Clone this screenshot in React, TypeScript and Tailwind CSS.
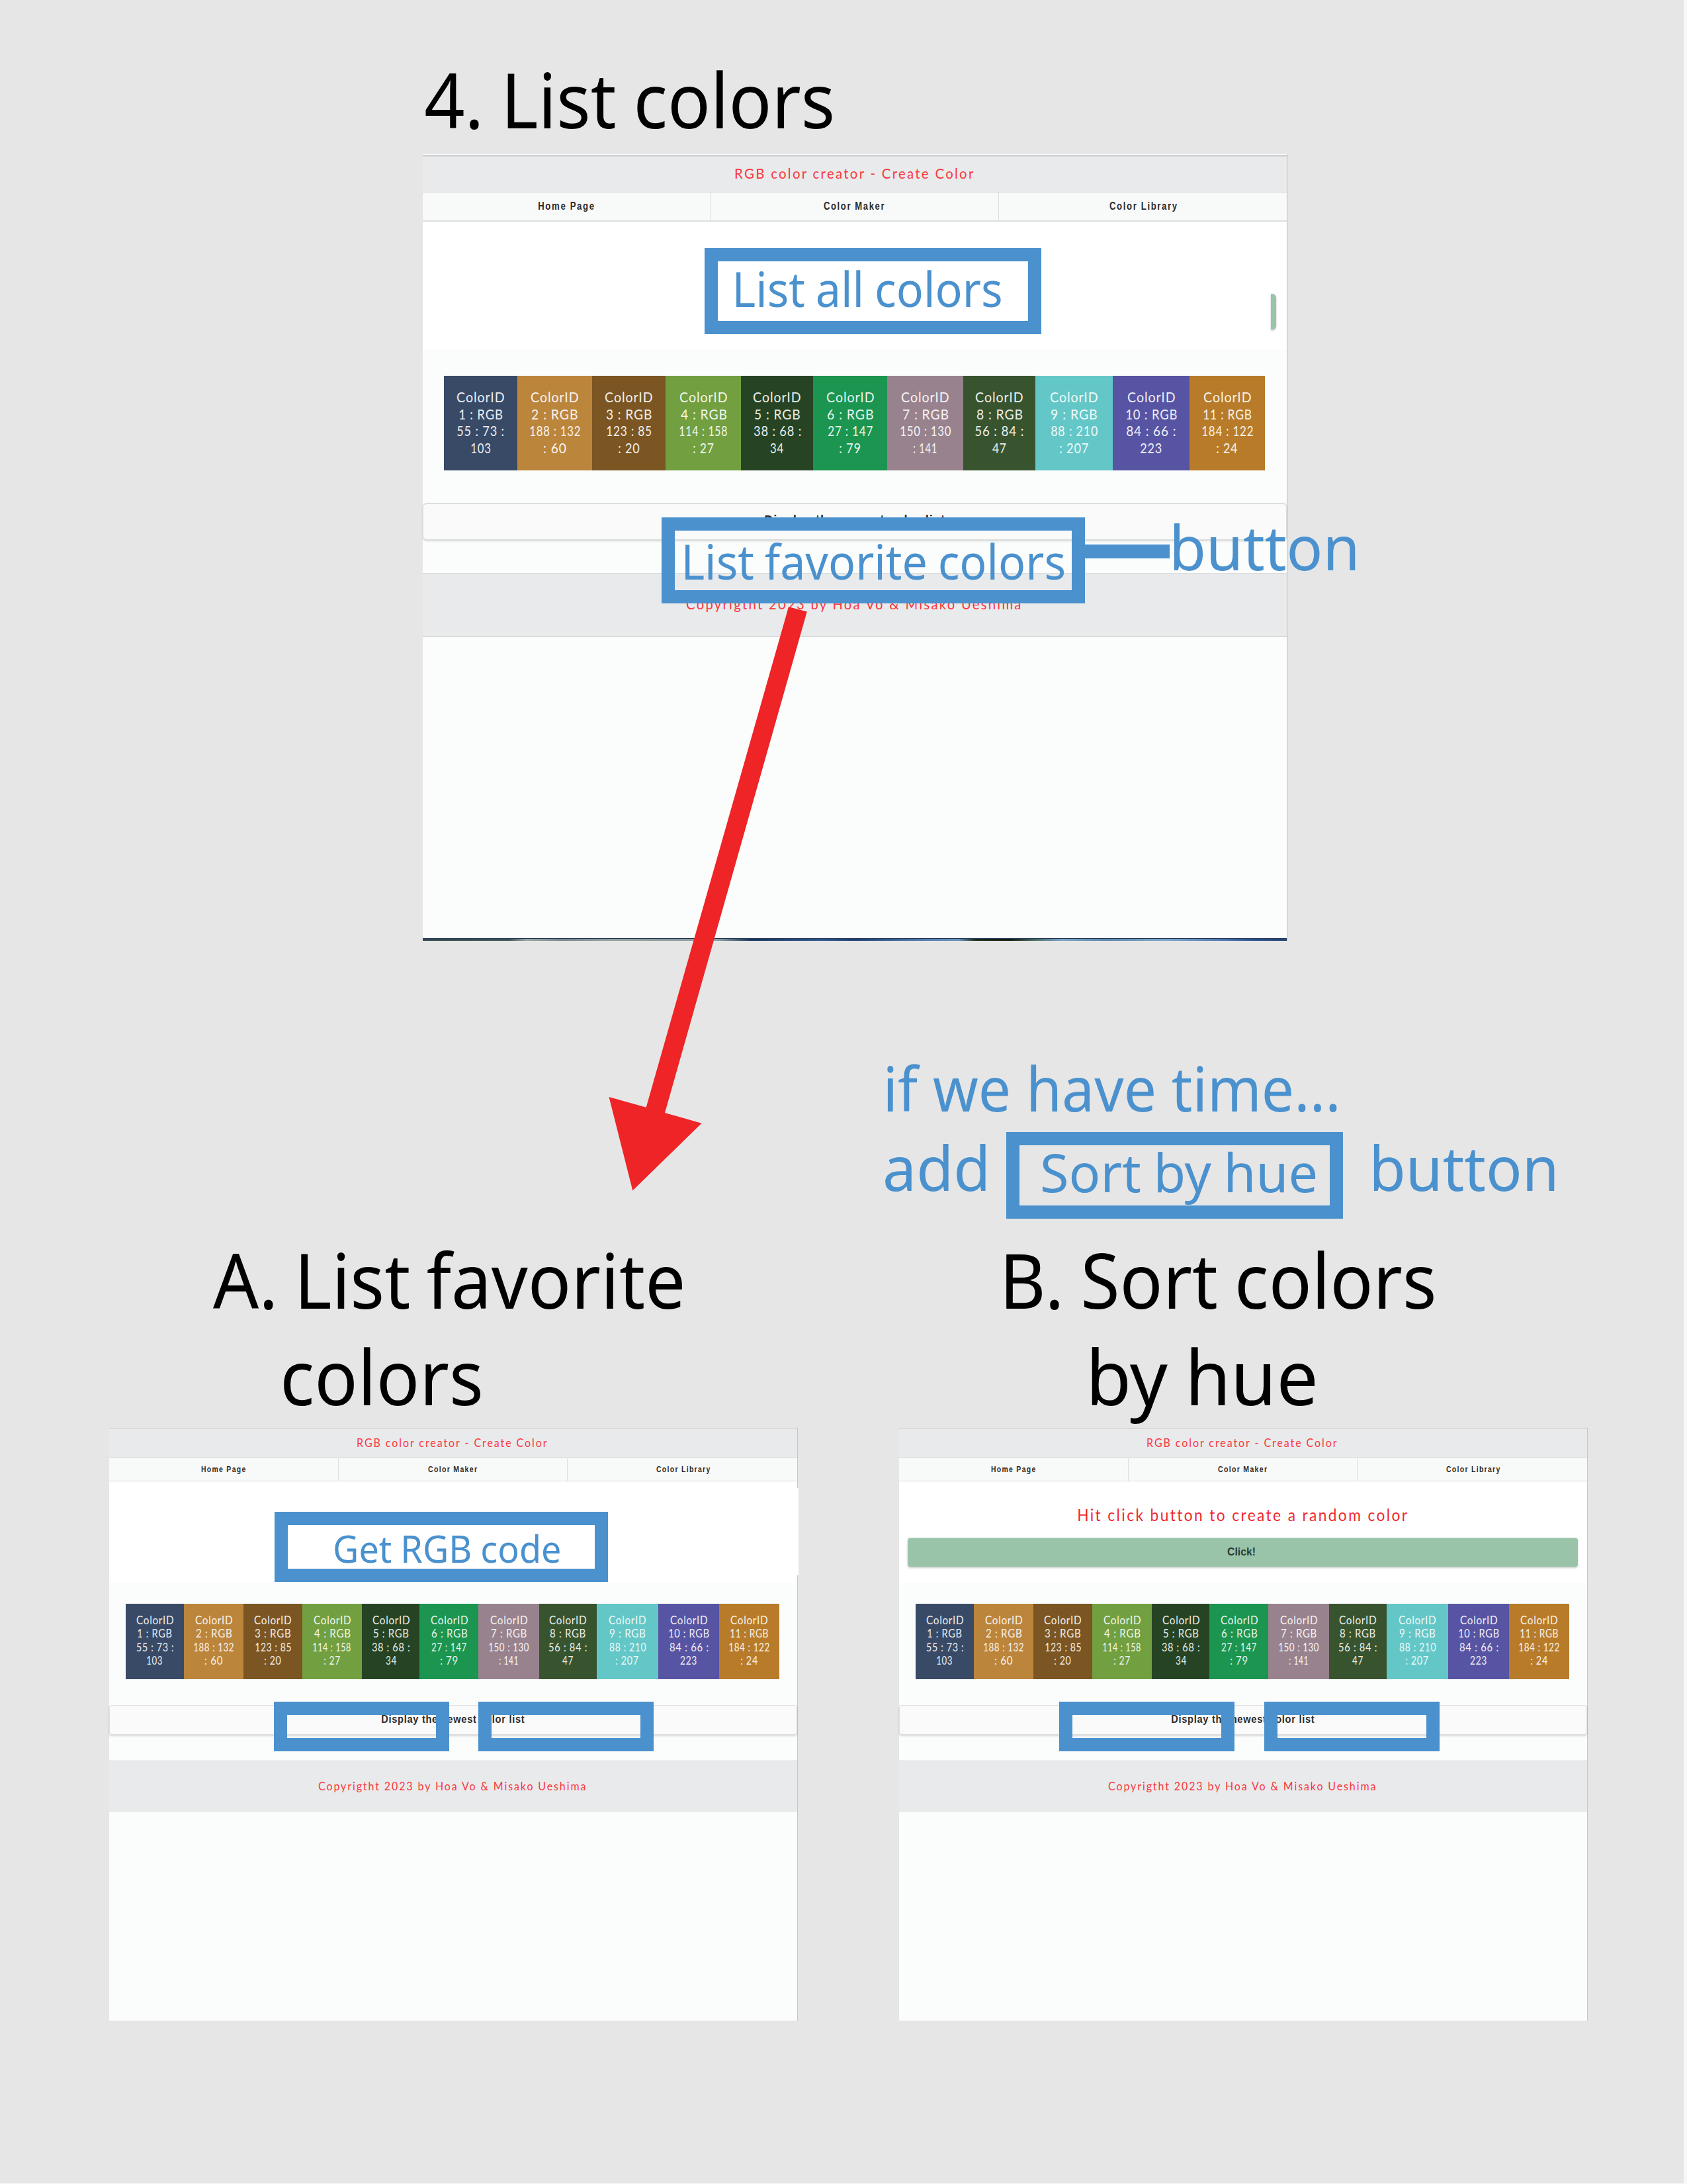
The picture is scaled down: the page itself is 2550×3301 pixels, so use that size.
import { useLayoutEffect, useRef, useState } from "react";
import clsx from "clsx";

/** One line of text whose visible glyphs span exactly `w` pixels. */
function Fit({ text, w, className }: { text: string; w: number; className?: string }) {
  const ref = useRef<HTMLSpanElement>(null);
  const [t, setT] = useState({ x: 0, s: 1 });
  useLayoutEffect(() => {
    const el = ref.current;
    const ctx = document.createElement("canvas").getContext("2d") as any;
    if (!el || !ctx) return;
    const cs = getComputedStyle(el);
    ctx.font = `${cs.fontWeight} ${cs.fontSize} ${cs.fontFamily}`;
    if (cs.letterSpacing !== "normal") ctx.letterSpacing = cs.letterSpacing;
    if (cs.wordSpacing !== "normal") ctx.wordSpacing = cs.wordSpacing;
    const m = ctx.measureText(text);
    const ink = m.actualBoundingBoxRight + m.actualBoundingBoxLeft;
    const s = w / ink;
    setT({ x: m.actualBoundingBoxLeft * s, s });
  }, [text, w]);
  return (
    <div className={clsx("whitespace-nowrap", className)} style={{ width: w }}>
      <span
        ref={ref}
        className="inline-block origin-left"
        style={{ transform: `translateX(${t.x}px) scaleX(${t.s})` }}
      >
        {text}
      </span>
    </div>
  );
}

type Swatch = { bg: string; lines: [string, number][] };

const swatches: Swatch[] = [
  { bg: "bg-[#394a67]", lines: [["ColorID", 71], ["1 : RGB", 65], ["55 : 73 :", 70.7], ["103", 29.5]] },
  { bg: "bg-[#bc853c]", lines: [["ColorID", 71], ["2 : RGB", 68.5], ["188 : 132", 76], [": 60", 33.4]] },
  { bg: "bg-[#7b5522]", lines: [["ColorID", 71], ["3 : RGB", 68.5], ["123 : 85", 67.6], [": 20", 31.2]] },
  { bg: "bg-[#729f3f]", lines: [["ColorID", 71], ["4 : RGB", 69], ["114 : 158", 72], [": 27", 30.4]] },
  { bg: "bg-[#264424]", lines: [["ColorID", 71], ["5 : RGB", 67.6], ["38 : 68 :", 72], ["34", 20.4]] },
  { bg: "bg-[#1b954f]", lines: [["ColorID", 71], ["6 : RGB", 68.5], ["27 : 147", 67], [": 79", 31.7]] },
  { bg: "bg-[#98828d]", lines: [["ColorID", 71], ["7 : RGB", 68], ["150 : 130", 76], [": 141", 34.8]] },
  { bg: "bg-[#38542f]", lines: [["ColorID", 71], ["8 : RGB", 68], ["56 : 84 :", 73], ["47", 20.4]] },
  { bg: "bg-[#63c7c7]", lines: [["ColorID", 71], ["9 : RGB", 68.7], ["88 : 210", 69.7], [": 207", 42.8]] },
  { bg: "bg-[#5754a3]", lines: [["ColorID", 71], ["10 : RGB", 76.6], ["84 : 66 :", 74], ["223", 31.8]] },
  { bg: "bg-[#b87b29]", lines: [["ColorID", 71], ["11 : RGB", 72], ["184 : 122", 77], [": 24", 31.8]] },
];

const sizes = {
  lg: {
    k: 1,
    panel: "w-[1307px] h-[1189px] border-r border-[#bcbcbc]",
    topLine: "h-[3px] border-t border-[#b9babb] bg-[#dcddde]",
    header: "h-[54px] pb-[3px] text-[21.5px] tracking-[2.4px] border-b border-[#dadbdc]",
    nav: "h-11 border-b-2 border-[#dcdfde] pb-px text-[16.3px] tracking-[2px]",
    hero: "h-[193px]",
    swatchRow: "mt-10 ml-8 mr-[33px] h-[143px]",
    swatch: "pt-[19px] text-[21.8px] leading-[25.6px] tracking-[1px]",
    button: "mt-[49px] h-14 border-t-2 rounded-md pb-[3px] text-[21.5px] tracking-[1px]",
    footer: "mt-[50px] h-[97px] pb-0.5 pr-[3px] border-b-2 text-[21.5px] tracking-[2.4px]",
    headerW: 361.4,
    navW: [84, 92, 102],
    buttonW: 272,
    footerW: 506,
  },
  sm: {
    k: 0.796,
    panel: "w-[1041px] h-[896px] border-r border-[#c8c8c8]",
    topLine: "h-0.5 border-t border-[#d2d4d6] bg-[#dcddde]",
    header: "h-11 pb-px pr-0.5 text-[17px] tracking-[2px] border-b border-[#dadbdc]",
    nav: "h-[35px] border-b border-[#d9dbda] text-[12.8px] tracking-[1.6px]",
    hero: "h-[154px]",
    swatchRow: "mt-[31px] ml-[25px] mr-[27px] h-[114px]",
    swatch: "pt-[15px] text-[17.3px] leading-[20.4px] tracking-[0.8px]",
    button: "mt-[39px] h-[45px] border-t rounded pb-0.5 text-[16.8px] tracking-[0.8px]",
    footer: "mt-[39px] h-[77px] pr-1 border-b text-[17px] tracking-[2px]",
    headerW: 288,
    navW: [67.1, 74, 82],
    buttonW: 216,
    footerW: 405,
  },
};

function Panel({ size, children }: { size: "lg" | "sm"; children?: React.ReactNode }) {
  const z = sizes[size];
  return (
    <div className={clsx("relative flex flex-col bg-[#fbfdfc]", z.panel)}>
      {size === "lg" && <div className="h-px shrink-0 bg-white" />}
      <div className={clsx("shrink-0", z.topLine)} />
      <header
        className={clsx(
          "flex shrink-0 items-center justify-center bg-[#e9eaec] font-['Lato',sans-serif] text-[#f8383c]",
          z.header,
        )}
      >
        <Fit text="RGB color creator - Create Color" w={z.headerW} />
      </header>
      <nav
        className={clsx(
          "grid shrink-0 grid-cols-3 divide-x divide-[#dcdfde] bg-[#f8f9f9] font-['Liberation_Sans',sans-serif] font-bold text-[#2c2c2c]",
          z.nav,
        )}
      >
        {["Home Page", "Color Maker", "Color Library"].map((label, i) => (
          <a key={label} className="flex items-center justify-center last:pl-0.5">
            <Fit text={label} w={z.navW[i]} />
          </a>
        ))}
      </nav>
      <section className={clsx("shrink-0 bg-white", z.hero)}>{children}</section>
      <ul
        className={clsx(
          "grid shrink-0 grid-cols-[111fr_113fr_111fr_114fr_109fr_112fr_115fr_109fr_117fr_116fr_114fr] font-['Lato',sans-serif] text-white/90",
          z.swatchRow,
        )}
      >
        {swatches.map((s, i) => (
          <li key={i} className={clsx("flex min-w-0 flex-col items-center", s.bg, z.swatch)}>
            {s.lines.map(([text, w], j) => (
              <Fit key={j} text={text} w={w * z.k} />
            ))}
          </li>
        ))}
      </ul>
      <button
        className={clsx(
          "flex shrink-0 items-center justify-center border border-[#dcdfde] bg-[#f9faf9] font-['Liberation_Sans',sans-serif] font-bold text-[#2c2c2c] shadow-[0_2px_3px_rgba(0,0,0,0.14)]",
          z.button,
        )}
      >
        <Fit text="Display the newest color list" w={z.buttonW} />
      </button>
      <footer
        className={clsx(
          "flex shrink-0 items-center justify-center border-t border-[#d9dbdb] bg-[#e9eaec] font-['Lato',sans-serif] text-[#f8383c]",
          z.footer,
        )}
      >
        <Fit text="Copyrigtht 2023 by Hoa Vo & Misako Ueshima" w={z.footerW} />
      </footer>
      {size === "lg" && (
        <div className="mt-auto h-1 shrink-0 border-t border-[#1d3350] bg-[linear-gradient(90deg,#35474f_0%,#3f5358_10%,#9aa6a4_12%,#76878a_16%,#93a1a1_22%,#8c9a9b_28%,#8fa2a6_34%,#17355c_38%,#2d5690_46%,#1c3f70_50%,#4a76ac_57%,#6a92bd_62%,#1c2c1c_64%,#141d10_68%,#4b6f6a_71%,#7ba3c6_74%,#5a89ae_79%,#7fa6cc_86%,#4f7bb4_92%,#2a5392_96%,#23426f_100%)]" />
      )}
    </div>
  );
}

export default function App() {
  return (
    <div className="relative h-[3301px] w-[2550px] overflow-hidden bg-[#f8f8f8] font-['Noto_Sans',sans-serif]">
      <main className="flex h-[3300px] w-[2545px] flex-col bg-[#e6e6e6] pt-[90px] text-[115px] text-black">
        <section className="ml-[639px]">
          <h1 className="ml-1 leading-[120px] [word-spacing:-2px]">
            <Fit text="4. List colors" w={614.5} />
          </h1>
          <div className="mt-[23px]">
            <Panel size="lg">
              <div className="flex justify-end pt-[109px] pr-4">
                <div className="h-[54px] w-2 rounded-r-md bg-[#99c4aa] shadow-[0_2px_3px_rgba(0,0,0,0.2)]" />
              </div>
            </Panel>
          </div>
        </section>

        <div className="mt-[439px] ml-[165px] flex gap-[153px]">
          <section className="w-[1041px]">
            <h2 className="leading-[146px] [word-spacing:-4px]">
              <Fit text="A. List favorite" w={708.7} className="ml-[157px]" />
              <Fit text="colors" w={297} className="ml-[264px]" />
            </h2>
            <div className="mt-[5px]">
              <Panel size="sm">
                <div className="mt-[10px] -mr-0.5 h-[132px] bg-white" />
              </Panel>
            </div>
          </section>
          <section className="w-[1041px]">
            <h2 className="leading-[146px] [word-spacing:-3px]">
              <Fit text="B. Sort colors" w={645.7} className="ml-[162px]" />
              <Fit text="by hue" w={337} className="ml-[291px]" />
            </h2>
            <div className="mt-[5px]">
              <Panel size="sm">
                <div className="flex flex-col items-center pt-9 pr-0.5">
                  <p className="font-['Lato',sans-serif] text-[24.8px] leading-[30px] tracking-[2.6px] text-[#f0282c] [word-spacing:normal]">
                    <Fit text="Hit click button to create a random color" w={497} />
                  </p>
                  <button className="mt-[19px] flex h-11 w-[1013px] items-center justify-center rounded border-t border-[#c9dcd0] bg-[#99c4aa] pr-1 pb-0.5 font-['Liberation_Sans',sans-serif] text-[16.5px] font-bold text-[#2c3a32] shadow-[0_2px_3px_rgba(0,0,0,0.2)]">
                    <Fit text="Click!" w={41.7} />
                  </button>
                </div>
              </Panel>
            </div>
          </section>
        </div>
      </main>

      {/* Annotations drawn over the mockups */}
      <div className="absolute inset-0 leading-none text-[#4a91ce]">
        <div className="absolute top-[375px] left-[1065px] h-[130px] w-[509px] border-[20.5px] border-[#4a91ce]" />
        <Fit text="List all colors" w={400} className="absolute top-[400px] left-[1113px] text-[72.5px] [word-spacing:-2px]" />

        <div className="absolute top-[782px] left-[999.5px] h-[130px] w-[640px] border-[20.5px] border-[#4a91ce]" />
        <Fit text="List favorite colors" w={572.5} className="absolute top-[812px] left-[1035.5px] text-[72.5px] [word-spacing:-2px]" />
        <div className="absolute top-[823px] left-[1639px] h-[21px] w-[129px] bg-[#4a91ce]" />
        <Fit text="button" w={275} className="absolute top-[779px] left-[1774px] text-[93.4px]" />

        <Fit text="if we have time..." w={680} className="absolute top-[1597px] left-[1341px] text-[93.4px]" />
        <Fit text="add" w={152} className="absolute top-[1717px] left-[1338px] text-[93.4px]" />
        <div className="absolute top-[1711px] left-[1521px] h-[131px] w-[509px] border-[20.5px] border-[#4a91ce]" />
        <Fit text="Sort by hue" w={412.5} className="absolute top-[1730px] left-[1575.5px] text-[81px] [word-spacing:-2px]" />
        <Fit text="button" w={274} className="absolute top-[1717px] left-[2076px] text-[93.4px]" />

        <div className="absolute top-[2285px] left-[415px] h-[106px] w-[504px] border-[20.5px] border-[#4a91ce]" />
        <Fit text="Get RGB code" w={340} className="absolute top-[2312px] left-[506px] text-[56px] [word-spacing:-1px]" />

        <div className="absolute top-[2572px] left-[414px] h-[75px] w-[265px] border-[20.5px] border-[#4a91ce]" />
        <div className="absolute top-[2572px] left-[723px] h-[75px] w-[265px] border-[20.5px] border-[#4a91ce]" />
        <div className="absolute top-[2572px] left-[1601px] h-[75px] w-[265px] border-[20.5px] border-[#4a91ce]" />
        <div className="absolute top-[2572px] left-[1911px] h-[75px] w-[265px] border-[20.5px] border-[#4a91ce]" />

        <svg className="absolute top-[910px] left-[910px] h-[900px] w-[320px]" viewBox="910 910 320 900" fill="#ee2426">
          <path d="M1192 917.3 1219.8 924.6 1005 1682 1060.5 1697.7 956.3 1799.5 920.5 1658 976.7 1673.7Z" />
        </svg>
      </div>
    </div>
  );
}
